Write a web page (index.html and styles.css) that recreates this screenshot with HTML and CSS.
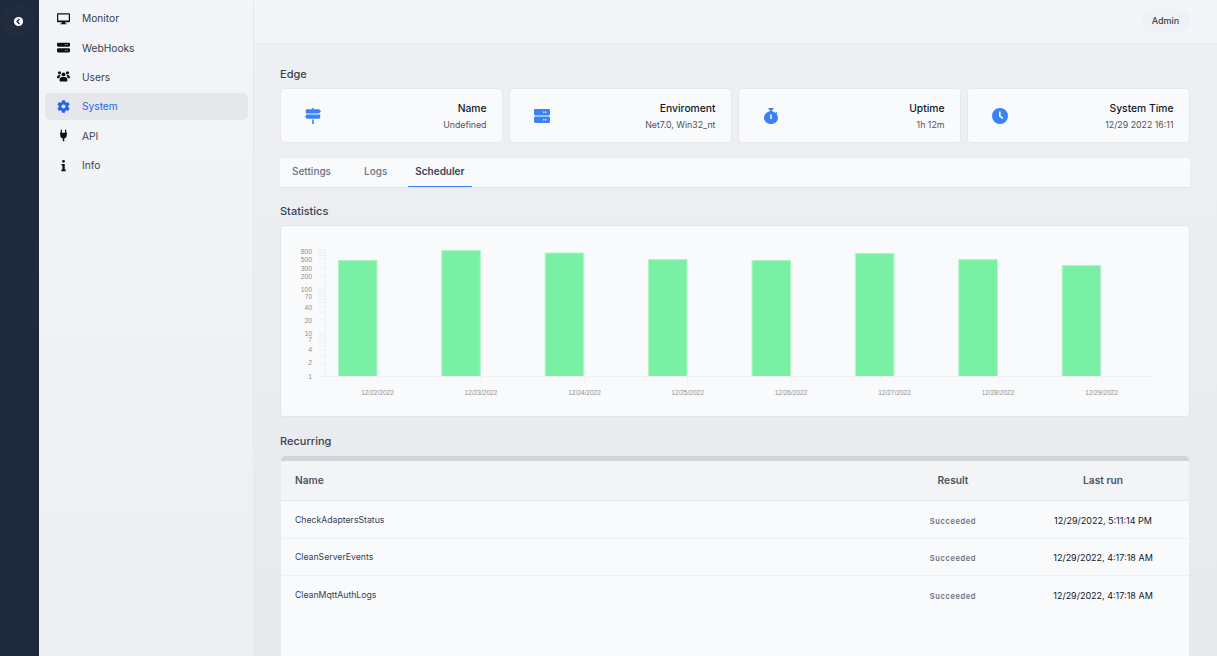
FILE: index.html
```html
<!DOCTYPE html>
<html lang="en">
<head>
<meta charset="utf-8">
<title>System</title>
<link rel="stylesheet" href="styles.css">
</head>
<body>
<div class="app">
  <aside class="rail">
    <button class="collapse" aria-label="Collapse">
      <svg viewBox="0 0 12 12" class="collapse-icon"><circle cx="6" cy="6" r="5" fill="#fff"/><path d="M7 3.400 4.500 6 7 8.600" fill="none" stroke="#1e293b" stroke-width="1.600"/></svg>
    </button>
  </aside>
  <nav class="sidebar">
    <a class="nav-item">
      <svg class="nav-icon" viewBox="0 0 16 16"><path d="M1.200 1.500h13.600c.7 0 1.200.5 1.200 1.200v8.600c0 .7-.5 1.200-1.200 1.200H10l.4 1.500h1.400v1.200H4.200V14h1.400l.4-1.500H1.200C.5 12.500 0 12 0 11.300V2.700c0-.7.500-1.200 1.200-1.200zM1.500 3v7.500h13V3z"/></svg>
      <span>Monitor</span>
    </a>
    <a class="nav-item">
      <svg class="nav-icon" viewBox="0 0 16 16"><path d="M1.500 2h13c.8 0 1.500.7 1.500 1.500v2c0 .8-.7 1.500-1.500 1.500h-13C.7 7 0 6.300 0 5.500v-2C0 2.700.7 2 1.500 2zm10.500 2v1h1V4zm-1.800 0v1h1V4zM1.500 9h13c.8 0 1.500.7 1.500 1.500v2c0 .8-.7 1.500-1.500 1.500h-13C.7 14 0 13.300 0 12.500v-2C0 9.700.7 9 1.500 9zm10.500 2v1h1v-1zm-1.800 0v1h1v-1z" fill-rule="evenodd"/></svg>
      <span>WebHooks</span>
    </a>
    <a class="nav-item">
      <svg class="nav-icon" viewBox="0 0 16 16"><circle cx="3.100" cy="3.500" r="1.900"/><circle cx="12.900" cy="3.500" r="1.900"/><circle cx="8" cy="5.400" r="2.400"/><path d="M0 9.800c0-2 1-3.600 2.700-3.600.8 0 1.400.3 1.800.7-1 .8-1.600 2-1.700 3.400H.7c-.4 0-.7-.2-.7-.5zm16 0c0-2-1-3.600-2.700-3.600-.8 0-1.400.3-1.800.7 1 .8 1.600 2 1.700 3.400h2.100c.4 0 .7-.2.700-.5zM6 8.500h4c1.600 0 2.700 1.400 2.700 3.300v1.700c0 .4-.3.700-.7.700H4c-.4 0-.7-.3-.7-.7v-1.700c0-1.900 1.100-3.300 2.700-3.300z"/></svg>
      <span>Users</span>
    </a>
    <a class="nav-item active">
      <svg class="nav-icon" viewBox="0 0 512 512"><path d="M487.4 315.7l-42.6-24.6c4.3-23.2 4.3-47 0-70.2l42.6-24.6c4.9-2.8 7.1-8.6 5.500-14-11.100-35.600-30-67.800-54.700-94.600-3.800-4.100-10-5.100-14.800-2.300L380.800 110c-17.900-15.400-38.500-27.300-60.800-35.100V25.800c0-5.600-3.900-10.500-9.400-11.700-36.700-8.200-74.300-7.800-109.200 0-5.500 1.200-9.400 6.100-9.400 11.700V75c-22.200 7.900-42.800 19.800-60.800 35.100L88.700 85.500c-4.900-2.800-11-1.900-14.800 2.300-24.700 26.700-43.600 58.900-54.700 94.600-1.700 5.400.6 11.200 5.500 14L67.300 221c-4.300 23.200-4.300 47 0 70.200l-42.600 24.600c-4.900 2.800-7.100 8.600-5.500 14 11.100 35.600 30 67.800 54.700 94.600 3.800 4.100 10 5.100 14.800 2.300l42.600-24.600c17.900 15.400 38.500 27.300 60.800 35.100v49.200c0 5.600 3.900 10.500 9.400 11.700 36.700 8.200 74.300 7.800 109.200 0 5.500-1.200 9.400-6.100 9.400-11.700v-49.200c22.200-7.900 42.800-19.800 60.800-35.100l42.600 24.600c4.900 2.800 11 1.900 14.800-2.300 24.700-26.700 43.600-58.900 54.700-94.600 1.500-5.500-.7-11.300-5.600-14.100zM256 336c-44.100 0-80-35.900-80-80s35.900-80 80-80 80 35.900 80 80-35.900 80-80 80z"/></svg>
      <span>System</span>
    </a>
    <a class="nav-item">
      <svg class="nav-icon" viewBox="0 0 16 16"><path d="M4.600 1h1.500v3.500H4.600zM9.900 1h1.500v3.500H9.900zM3.500 4.500h9v1.200h-.5V8c0 1.900-1.300 3.300-3.100 3.600V15H7.100v-3.400C5.300 11.300 4 9.900 4 8V5.700h-.5z"/></svg>
      <span>API</span>
    </a>
    <a class="nav-item">
      <svg class="nav-icon" viewBox="0 0 16 16"><circle cx="8" cy="2.800" r="1.700"/><path d="M5.600 6h3.900v7h1.200v2H5.400v-2h1.300V8H5.600z"/></svg>
      <span>Info</span>
    </a>
  </nav>
  <div class="main">
    <header class="topbar">
      <button class="user-btn">Admin</button>
    </header>
    <main class="content">
      <h2 class="section-title first">Edge</h2>
      <section class="stat-row">
        <article class="stat-card">
          <svg class="stat-icon" viewBox="0 0 16 16"><path d="M7.200 0h1.600v1.200h5c.3 0 .5.100.7.300L16 3.300l-1.500 1.800c-.2.200-.4.300-.7.300H1.500c-.4 0-.7-.3-.7-.7V1.900c0-.4.300-.7.700-.7h5.700zM2.200 6.400h12.300c.4 0 .7.300.7.700v2.900c0 .4-.3.700-.7.700H2.200c-.3 0-.5-.1-.7-.3L0 8.600l1.500-1.900c.2-.2.400-.3.700-.3zM7.200 11.500h1.600V16H7.200z"/></svg>
          <div class="stat-text"><div class="stat-label">Name</div><div class="stat-value">Undefined</div></div>
        </article>
        <article class="stat-card">
          <svg class="stat-icon" viewBox="0 0 16 16"><path fill-rule="evenodd" d="M1.300 1h13.400C15.400 1 16 1.600 16 2.300v4c0 .7-.6 1.200-1.300 1.200H1.300C.6 7.500 0 7 0 6.300v-4C0 1.600.6 1 1.300 1zm10 2.600v1.300h1.100V3.600zm-2 0v1.300h1.100V3.600zM1.300 8.500h13.400c.7 0 1.300.6 1.300 1.300v4c0 .7-.6 1.200-1.300 1.200H1.300C.6 15 0 14.500 0 13.800v-4c0-.7.600-1.300 1.300-1.300zm10 2.600v1.300h1.100v-1.300zm-2 0v1.300h1.100v-1.300z"/></svg>
          <div class="stat-text"><div class="stat-label">Enviroment</div><div class="stat-value">Net7.0, Win32_nt</div></div>
        </article>
        <article class="stat-card">
          <svg class="stat-icon" viewBox="0 0 16 16"><path fill-rule="evenodd" d="M5.500 0h5v1.700H9v1.500c1.300.2 2.500.8 3.400 1.700l.8-.8 1.300 1.300-.9.900C14.500 7.400 15 8.700 15 10c0 3.300-3.100 6-7 6s-7-2.700-7-6c0-3.400 2.700-6.300 6-6.800V1.700H5.500zM7.200 6.500v4.500h1.600V6.500z"/></svg>
          <div class="stat-text"><div class="stat-label">Uptime</div><div class="stat-value">1h 12m</div></div>
        </article>
        <article class="stat-card">
          <svg class="stat-icon" viewBox="0 0 16 16"><path fill-rule="evenodd" d="M8 0a8 8 0 1 1 0 16A8 8 0 0 1 8 0zM7 3.500v5l3.400 2.500 1-1.300L8.700 7.700V3.500z"/></svg>
          <div class="stat-text"><div class="stat-label">System Time</div><div class="stat-value">12/29 2022 16:11</div></div>
        </article>
      </section>
      <div class="tabs">
        <a class="tab tab-settings">Settings</a>
        <a class="tab tab-logs">Logs</a>
        <a class="tab tab-active">Scheduler</a>
      </div>
      <h2 class="section-title stats-title">Statistics</h2>
      <section class="chart-card">
        <svg class="chart" viewBox="281 226 908 190">
          <g class="bars">
            <rect x="338.500" y="260.500" width="38.500" height="116"/>
            <rect x="441.800" y="250.500" width="38.500" height="126"/>
            <rect x="545.200" y="253" width="38.500" height="123.500"/>
            <rect x="648.500" y="259.500" width="38.500" height="117"/>
            <rect x="752" y="260.500" width="38.500" height="116"/>
            <rect x="855.400" y="253.500" width="38.500" height="123"/>
            <rect x="958.800" y="259.500" width="38.500" height="117"/>
            <rect x="1062.200" y="265.500" width="38.500" height="111"/>
          </g>
          <path class="grid" d="M325.500 250V376.500M318 376.500H1152M318 363.400h7M318 355.700h7M318 350.200h7M318 346h7M318 342.600h7M318 339.700h7M318 337.100h7M318 334.900h7M318 332.900h7M318 319.800h7M318 312.100h7M318 306.600h7M318 302.400h7M318 299h7M318 296.100h7M318 293.500h7M318 291.300h7M318 289.300h7M318 276.200h7M318 268.500h7M318 263h7M318 258.800h7M318 255.400h7M318 252.500h7M318 249.900h7M377.500 376.500v6M481 376.500v6M584.500 376.500v6M687.500 376.500v6M791 376.500v6M894.500 376.500v6M998 376.500v6M1101.500 376.500v6"/>
          <g class="y-labels">
            <text x="312" y="253.500">800</text>
            <text x="312" y="261.500">500</text>
            <text x="312" y="271">300</text>
            <text x="312" y="279">200</text>
            <text x="312" y="292">100</text>
            <text x="312" y="298.500">70</text>
            <text x="312" y="309.500">40</text>
            <text x="312" y="322.500">20</text>
            <text x="312" y="335.500">10</text>
            <text x="312" y="341.500">7</text>
            <text x="312" y="351.500">4</text>
            <text x="312" y="364.500">2</text>
            <text x="312" y="378.500">1</text>
          </g>
          <g class="x-labels">
            <text x="377.500" y="395">12/22/2022</text>
            <text x="481" y="395">12/23/2022</text>
            <text x="584.500" y="395">12/24/2022</text>
            <text x="687.500" y="395">12/25/2022</text>
            <text x="791" y="395">12/26/2022</text>
            <text x="894.500" y="395">12/27/2022</text>
            <text x="998" y="395">12/28/2022</text>
            <text x="1101.500" y="395">12/29/2022</text>
          </g>
        </svg>
      </section>
      <h2 class="section-title recurring-title">Recurring</h2>
      <section class="table-card">
        <div class="table-band"></div>
        <table class="jobs">
          <thead>
            <tr><th class="col-name">Name</th><th class="col-result">Result</th><th class="col-run">Last run</th></tr>
          </thead>
          <tbody>
            <tr><td class="col-name">CheckAdaptersStatus</td><td class="col-result"><span class="badge">Succeeded</span></td><td class="col-run">12/29/2022, 5:11:14 PM</td></tr>
            <tr><td class="col-name">CleanServerEvents</td><td class="col-result"><span class="badge">Succeeded</span></td><td class="col-run">12/29/2022, 4:17:18 AM</td></tr>
            <tr><td class="col-name">CleanMqttAuthLogs</td><td class="col-result"><span class="badge">Succeeded</span></td><td class="col-run">12/29/2022, 4:17:18 AM</td></tr>
          </tbody>
        </table>
      </section>
    </main>
  </div>
</div>
</body>
</html>
```

FILE: styles.css
```css
* { box-sizing: border-box; }
html, body { margin: 0; height: 100%; overflow: hidden; }
body {
  font-family: Inter, "Liberation Sans", sans-serif;
  color: #374151;
  background: #eeeff2;
}
.app { display: flex; height: 656px; overflow: hidden; }

.rail { width: 39px; flex: none; background: #1e293b; }
.collapse {
  display: flex; align-items: center; justify-content: center;
  width: 34px; height: 34px; margin: 4px 0 0 1px; padding: 0;
  border: 0; border-radius: 50%; background: #202c3e;
}
.collapse-icon { width: 11px; height: 11px; }

.sidebar {
  width: 215px; flex: none; padding: 4.800px 5px 0 6px;
  display: flex; flex-direction: column; gap: 2.350px;
  background: linear-gradient(#f3f5f9, #eceef2);
  border-right: 1px solid #e7e8ec;
}
.nav-item {
  display: flex; align-items: center; height: 27px; padding-left: 12px;
  border-radius: 5px; font-size: 10.200px; color: #374151;
}
.nav-item.active { background: #e5e7eb; color: #2563eb; }
.nav-icon { width: 13px; height: 13px; margin-right: 12px; flex: none; fill: #0b0f19; }
.nav-item.active .nav-icon { fill: #2563eb; }

.main { flex: 1; min-width: 0; display: flex; flex-direction: column;
  background: linear-gradient(#eff0f3, #e8e9ed); }
.topbar {
  height: 44px; flex: none; display: flex; align-items: flex-start; justify-content: flex-end;
  padding: 9px 27px 0 0;
  background: #f3f5f8; border-bottom: 1px solid #e8e9ed;
}
.user-btn {
  width: 49px; height: 23px; padding: 0 0 1px; border: 0; border-radius: 12px;
  background: #f0f1f4; font: 500 9px Inter, sans-serif; color: #374151;
}
.content { padding: 0 27px 0 26px; }

.section-title { margin: 0; font-size: 11px; font-weight: 500; line-height: 15px; color: #374151; padding-top: 16px; padding-bottom: 7px; }
.section-title.first { padding-top: 23px; padding-bottom: 6px; }
.section-title.stats-title { padding-bottom: 6px; }
.section-title.recurring-title { padding-top: 17px; }

.stat-row { display: grid; grid-template-columns: repeat(4, 1fr); gap: 6px; }
.stat-card {
  height: 55px; display: flex; align-items: center; justify-content: space-between;
  padding: 0 15.500px 0 24px;
  background: #f9fafc; border: 1px solid #e7e8ec; border-radius: 4px;
}
.stat-icon { width: 16px; height: 16px; fill: #3b82f6; flex: none; }
.stat-text { text-align: right; }
.stat-label { font-size: 10.300px; font-weight: 500; line-height: 14px; color: #111827; }
.stat-value { font-size: 8.800px; line-height: 12px; margin-top: 4px; color: #4b5563; }

.tabs {
  display: flex; height: 31px; margin-top: 14px; padding-left: 5px;
  background: #f9fafc; border-top: 1px solid #e9eaee; border-bottom: 1px solid #e3e4e8;
}
.tab { display: flex; align-items: center; padding: 0 7px 3px; font-size: 10px; font-weight: 500; color: #6b7280; }
.tab-settings { margin-right: 19px; }
.tab-logs { margin-right: 14px; }
.tab-active { color: #374151; font-weight: 600; border-bottom: 1px solid #3b82f6; }

.chart-card { height: 192px; background: #f9fafc; border: 1px solid #e3e4e8; border-radius: 4px; }
.chart { display: block; width: 908px; height: 190px; }
.bars rect { fill: #7af0a4; stroke: #b0f5c8; stroke-width: 1; }
.grid { fill: none; stroke: #eef0f2; stroke-width: 1; }
.y-labels, .x-labels { opacity: .99; }
.y-labels text { font: 6.800px "Liberation Sans", sans-serif; fill: #8f8f8f; text-anchor: end; }
.x-labels text { font: 6.500px "Liberation Sans", sans-serif; fill: #8f8f8f; text-anchor: middle; }

.table-card { height: 300px; margin: 0 1px; overflow: hidden; background: #f9fafc; border-radius: 4px 4px 0 0; }
.table-band { height: 5px; background: #d1d5db; }
.jobs { width: 100%; border-collapse: collapse; table-layout: fixed; }
.jobs th { height: 39.500px; padding-bottom: 2px; background: #f3f4f6; border-bottom: 1px solid #e5e7eb; font-size: 10.200px; font-weight: 600; color: #4b5563; }
.jobs td { height: 37.500px; padding-top: 3px; border-bottom: 1px solid #f0f1f4; font-size: 9px; color: #111827; }
.jobs tr:last-child td { border-bottom: 0; }
.col-name { padding-left: 14px; text-align: left; }
.col-result { width: 128px; text-align: center; }
.col-run { width: 172px; text-align: center; }
.jobs td.col-name { padding-top: 2px; color: #374151; font-size: 8.700px; }
.badge { font-size: 7.500px; font-weight: 600; letter-spacing: .6px; color: #6b7280; }
```
